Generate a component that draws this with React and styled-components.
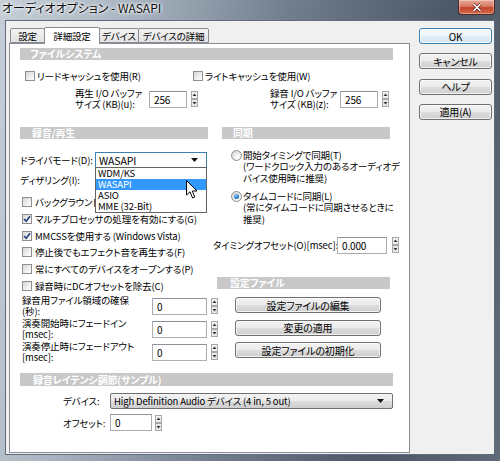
import React from 'react';
import styled, { createGlobalStyle } from 'styled-components';

const GlobalStyle = createGlobalStyle`
  html, body {
    margin: 0;
    padding: 0;
    background: #ffffff;
  }
  body {
    font-family: "Noto Sans CJK JP", "Noto Sans", sans-serif;
    font-size: 9.5px;
    letter-spacing: -0.15px;
    color: #000000;
    font-feature-settings: "palt";
  }
`;

const Window = styled.div`
  width: 500px;
  height: 461px;
  box-sizing: border-box;
  display: flex;
  flex-direction: column;
  padding: 0 5px 6px 5px;
  background: linear-gradient(100deg, #c6cfd8 0%, #aab6c2 22%, #717e8c 50%, #4c5767 78%, #5f6b79 100%);
`;

const TitleBar = styled.div`
  height: 20px;
  display: flex;
  align-items: flex-start;
`;

const Title = styled.div`
  margin-left: -3px;
  font-size: 12px;
  line-height: 16px;
  letter-spacing: 0;
  color: #0b0b0b;
  text-shadow: 0 0 5px #ffffff, 0 0 3px #ffffff, 0 0 2px #e8eef4;
  white-space: nowrap;
`;

const CloseButton = styled.div`
  margin-left: auto;
  width: 37px;
  height: 15px;
  box-sizing: border-box;
  border: 1px solid #4a2720;
  border-top: none;
  border-radius: 0 0 4px 4px;
  background: linear-gradient(#e7a796 0%, #d97d66 45%, #c4432b 55%, #d46a4c 100%);
  display: flex;
  align-items: center;
  justify-content: center;
  box-shadow: inset 0 0 0 1px rgba(255, 255, 255, 0.35);
`;

const Body = styled.div`
  flex: 1;
  display: flex;
  box-sizing: border-box;
  background: #f0f0f0;
  border: 1px solid #5f6c7c;
  padding: 6px 0 0 3px;
`;

const LeftPane = styled.div`
  width: 401px;
  display: flex;
  flex-direction: column;
`;

const TabStrip = styled.div`
  height: 16px;
  display: flex;
  align-items: flex-end;
  padding-left: 1px;
  position: relative;
  z-index: 1;
`;

const Tab = styled.div`
  width: ${p => p.$w}px;
  height: ${p => (p.$active ? 17 : 15)}px;
  margin-bottom: ${p => (p.$active ? -1 : 0)}px;
  box-sizing: border-box;
  border: 1px solid #898c95;
  border-bottom: ${p => (p.$active ? 'none' : '1px solid #898c95')};
  margin-right: -1px;
  border-radius: 2px 2px 0 0;
  background: ${p => (p.$active ? '#ffffff' : 'linear-gradient(#f3f3f3, #e3e3e3)')};
  display: flex;
  align-items: center;
  justify-content: center;
  font-size: 9.5px;
  white-space: nowrap;
`;

const Panel = styled.div`
  height: 410px;
  box-sizing: border-box;
  background: #ffffff;
  border: 1px solid #898c95;
  padding: 4px 16px 0 10px;
  display: flex;
  flex-direction: column;
`;

const SectionBar = styled.div`
  height: ${p => p.$h || 12}px;
  margin-top: ${p => p.$mt || 0}px;
  margin-left: ${p => p.$inset || 0}px;
  margin-right: ${p => p.$right || 0}px;
  padding-left: ${p => p.$pad || 10}px;
  background: #c8c8c8;
  color: #ffffff;
  font-weight: bold;
  font-size: 10px;
  line-height: ${p => p.$h || 12}px;
  white-space: nowrap;
`;

const CheckRow = styled.div`
  height: 14px;
  margin-top: 9px;
  padding-left: 5px;
  display: flex;
  align-items: center;
`;

const CheckItem = styled.div`
  width: ${p => (p.$w ? `${p.$w}px` : 'auto')};
  display: flex;
  align-items: center;
  gap: 2px;
  white-space: nowrap;
`;

const Box = styled.div`
  width: 10px;
  height: 10px;
  flex: none;
  box-sizing: border-box;
  border: 1px solid #8e8f8f;
  background: linear-gradient(135deg, #d6d6d6 0%, #f4f4f4 70%, #ffffff 100%);
  display: flex;
  align-items: center;
  justify-content: center;
`;

const CheckLine = styled.div`
  height: 16.8px;
  padding-left: 2px;
  display: flex;
  align-items: center;
  gap: 3px;
  white-space: nowrap;
`;

const CheckList = styled.div`
  margin-top: 5.6px;
  display: flex;
  flex-direction: column;
`;

const BufferRow = styled.div`
  height: 22px;
  margin-top: 5px;
  display: flex;
  align-items: center;
`;

const Group = styled.div`
  display: flex;
  align-items: center;
  margin-left: ${p => p.$ml || 0}px;
`;

const TwoLine = styled.div`
  width: ${p => p.$w}px;
  flex: none;
  line-height: 11.5px;
  white-space: nowrap;
`;

const NumInput = styled.div`
  width: ${p => p.$w}px;
  height: 17px;
  flex: none;
  box-sizing: border-box;
  border: 1px solid #abadb3;
  border-top-color: #8f9399;
  background: #ffffff;
  padding-left: 4px;
  display: flex;
  align-items: center;
  font-size: 10px;
`;

const SpinWrap = styled.div`
  margin-left: ${p => p.$ml || 4}px;
  display: flex;
  flex: none;
`;

const Columns = styled.div`
  display: flex;
  margin-top: 17px;
`;

const LeftCol = styled.div`
  width: 188px;
  display: flex;
  flex-direction: column;
`;

const RightCol = styled.div`
  width: 180px;
  margin-left: 5px;
  display: flex;
  flex-direction: column;
`;

const FieldRow = styled.div`
  height: 16px;
  margin-top: ${p => p.$mt || 0}px;
  padding-left: ${p => p.$pl || 0}px;
  display: flex;
  align-items: center;
`;

const FieldLabel = styled.div`
  width: ${p => p.$w}px;
  flex: none;
  white-space: nowrap;
`;

const Select = styled.div`
  position: relative;
  width: ${p => p.$w}px;
  height: 16px;
  flex: none;
  box-sizing: border-box;
  border: 1px solid ${p => (p.$focus ? '#3c7fb1' : '#707070')};
  border-radius: ${p => (p.$focus ? 0 : 2)}px;
  background: ${p => (p.$focus ? '#ffffff' : 'linear-gradient(#f2f2f2 0%, #ebebeb 50%, #dddddd 51%, #cfcfcf 100%)')};
  padding: 0 8px 0 3px;
  display: flex;
  align-items: center;
  justify-content: space-between;
  font-size: ${p => (p.$focus ? 10.5 : 9.5)}px;
  white-space: nowrap;
`;

const Dropdown = styled.div`
  position: absolute;
  top: 100%;
  left: -1px;
  right: -1px;
  z-index: 5;
  box-sizing: border-box;
  border: 1px solid #646464;
  background: #ffffff;
  display: flex;
  flex-direction: column;
`;

const Option = styled.div`
  height: 11px;
  line-height: 11px;
  padding-left: 2px;
  font-size: 9.5px;
  background: ${p => (p.$hl ? '#3399ff' : 'transparent')};
  color: ${p => (p.$hl ? '#ffffff' : '#000000')};
`;

const Cursor = styled.svg`
  position: absolute;
  left: 90px;
  top: 12px;
`;

const NumRow = styled.div`
  height: 23px;
  margin-top: ${p => p.$mt || 0}px;
  padding-left: 2px;
  display: flex;
  align-items: center;
`;

const RadioOption = styled.div`
  margin-top: ${p => p.$mt}px;
  padding-left: 18px;
  display: flex;
  align-items: flex-start;
`;

const Radio = styled.div`
  width: 11px;
  height: 11px;
  flex: none;
  margin-top: 0.5px;
  box-sizing: border-box;
  border: 1px solid #8e8f8f;
  border-radius: 50%;
  background: radial-gradient(circle at 65% 70%, #ffffff 0%, #eeeeee 40%, #cfcfcf 100%);
  display: flex;
  align-items: center;
  justify-content: center;
`;

const RadioDot = styled.div`
  width: 5px;
  height: 5px;
  border-radius: 50%;
  background: radial-gradient(circle at 40% 35%, #8fd1ff 0%, #2a7cc7 55%, #174f86 100%);
`;

const RadioText = styled.div`
  margin-left: 1px;
  line-height: 11.5px;
  white-space: nowrap;
`;

const ActionButton = styled.div`
  width: ${p => p.$w}px;
  height: 16px;
  margin-top: ${p => p.$mt || 0}px;
  margin-left: ${p => p.$ml || 0}px;
  box-sizing: border-box;
  border: 1px solid ${p => (p.$focus ? '#3c7fb1' : '#707070')};
  border-radius: 3px;
  background: ${p =>
    p.$focus
      ? 'linear-gradient(#f4f9fc 0%, #eef5fa 50%, #e0edf6 51%, #d4e6f2 100%)'
      : 'linear-gradient(#f2f2f2 0%, #ebebeb 50%, #dddddd 51%, #cfcfcf 100%)'};
  box-shadow: inset 0 0 0 1px rgba(255, 255, 255, 0.7);
  display: flex;
  align-items: center;
  justify-content: center;
  font-size: 10px;
  white-space: nowrap;
`;

const ButtonColumn = styled.div`
  width: 73px;
  margin-left: 9px;
  padding-top: 1px;
  display: flex;
  flex-direction: column;
  gap: 9.3px;
`;

const Spinner = () => (
  <svg width="7" height="16" viewBox="0 0 7 16">
    <rect x="0.5" y="0.5" width="6" height="7" fill="#f3f3f3" stroke="#a7a7a7" />
    <rect x="0.5" y="8.5" width="6" height="7" fill="#e9e9e9" stroke="#a7a7a7" />
    <path d="M3.5 2.5 L5.5 5 L1.5 5 Z" fill="#333" />
    <path d="M1.5 11 L5.5 11 L3.5 13.5 Z" fill="#333" />
  </svg>
);

const Arrow = () => (
  <svg width="7" height="4" viewBox="0 0 7 4">
    <path d="M0 0 L7 0 L3.5 4 Z" fill="#111" />
  </svg>
);

const Check = ({ on }) => (
  <Box>
    {on && (
      <svg width="8" height="8" viewBox="0 0 8 8">
        <path d="M1 4 L3.2 6.3 L7 1.2" fill="none" stroke="#24407a" strokeWidth="1.6" />
      </svg>
    )}
  </Box>
);

const Spin = ({ w, value, ml }) => (
  <>
    <NumInput $w={w}>{value}</NumInput>
    <SpinWrap $ml={ml}>
      <Spinner />
    </SpinWrap>
  </>
);

const checks = [
  ['バックグラウンド', false],
  ['マルチプロセッサの処理を有効にする(G)', true],
  ['MMCSSを使用する (Windows Vista)', true],
  ['停止後でもエフェクト音を再生する(F)', false],
  ['常にすべてのデバイスをオープンする(P)', false],
  ['録音時にDCオフセットを除去(C)', false],
];

const numRows = [
  ['録音用ファイル領域の確保', '(秒):'],
  ['演奏開始時にフェードイン', '[msec]:'],
  ['演奏停止時にフェードアウト', '[msec]:'],
];

const drivers = ['WDM/KS', 'WASAPI', 'ASIO', 'MME (32-Bit)'];

export default function App() {
  return (
    <>
      <GlobalStyle />
      <Window>
        <TitleBar>
          <Title>オーディオオプション - WASAPI</Title>
          <CloseButton>
            <svg width="10" height="9" viewBox="0 0 10 9">
              <path d="M1.5 1 L8.5 8 M8.5 1 L1.5 8" stroke="#5a1e14" strokeWidth="3" />
              <path d="M1.5 1 L8.5 8 M8.5 1 L1.5 8" stroke="#ffffff" strokeWidth="1.6" />
            </svg>
          </CloseButton>
        </TitleBar>
        <Body>
          <LeftPane>
            <TabStrip>
              <Tab $w={35}>設定</Tab>
              <Tab $w={56} $active>詳細設定</Tab>
              <Tab $w={40}>デバイス</Tab>
              <Tab $w={71}>デバイスの詳細</Tab>
            </TabStrip>
            <Panel>
              <SectionBar>ファイルシステム</SectionBar>
              <CheckRow>
                <CheckItem $w={168}>
                  <Check />
                  リードキャッシュを使用(R)
                </CheckItem>
                <CheckItem>
                  <Check />
                  ライトキャッシュを使用(W)
                </CheckItem>
              </CheckRow>
              <BufferRow>
                <Group $ml={55}>
                  <TwoLine $w={74}>
                    再生 I/O バッファ
                    <br />
                    サイズ (KB)(u):
                  </TwoLine>
                  <Spin w={38} value="256" />
                </Group>
                <Group $ml={72}>
                  <TwoLine $w={70}>
                    録音 I/O バッファ
                    <br />
                    サイズ (KB)(z):
                  </TwoLine>
                  <Spin w={38} value="256" />
                </Group>
              </BufferRow>

              <Columns>
                <LeftCol>
                  <SectionBar $pad={12}>録音/再生</SectionBar>
                  <FieldRow $mt={13}>
                    <FieldLabel $w={75}>ドライバモード(D):</FieldLabel>
                    <Select $w={112} $focus>
                      WASAPI
                      <Arrow />
                      <Dropdown>
                        {drivers.map(d => (
                          <Option key={d} $hl={d === 'WASAPI'}>
                            {d}
                          </Option>
                        ))}
                        <Cursor width="12" height="19" viewBox="0 0 12 19">
                          <path
                            d="M0.5 0.5 L0.5 15 L4 11.8 L6.6 18 L8.8 17 L6.3 11 L11 11 Z"
                            fill="#ffffff"
                            stroke="#000000"
                            strokeWidth="1"
                            strokeLinejoin="round"
                          />
                        </Cursor>
                      </Dropdown>
                    </Select>
                  </FieldRow>
                  <FieldRow $mt={4}>
                    <FieldLabel $w={75}>ディザリング(I):</FieldLabel>
                    <Select $w={112}>
                      <span />
                      <Arrow />
                    </Select>
                  </FieldRow>
                  <CheckList>
                    {checks.map(([label, on]) => (
                      <CheckLine key={label}>
                        <Check on={on} />
                        {label}
                      </CheckLine>
                    ))}
                  </CheckList>
                  {numRows.map(([a, b], i) => (
                    <NumRow key={a} $mt={i === 0 ? 0.6 : 0}>
                      <TwoLine $w={130}>
                        {a}
                        <br />
                        {b}
                      </TwoLine>
                      <Spin w={55} value="0" />
                    </NumRow>
                  ))}
                </LeftCol>

                <RightCol>
                  <SectionBar $inset={9} $right={3} $pad={11}>
                    同期
                  </SectionBar>
                  <RadioOption $mt={10.5}>
                    <Radio />
                    <RadioText>
                      開始タイミングで同期(T)
                      <br />
                      (ワードクロック入力のあるオーディオデ
                      <br />
                      バイス使用時に推奨)
                    </RadioText>
                  </RadioOption>
                  <RadioOption $mt={6.5}>
                    <Radio>
                      <RadioDot />
                    </Radio>
                    <RadioText>
                      タイムコードに同期(L)
                      <br />
                      (常にタイムコードに同期させるときに
                      <br />
                      推奨)
                    </RadioText>
                  </RadioOption>
                  <FieldRow $mt={12}>
                    <FieldLabel $w={124}>タイミングオフセット(O)[msec]:</FieldLabel>
                    <Spin w={50} value="0.000" ml={5} />
                  </FieldRow>
                  <SectionBar $mt={24} $inset={4} $right={3} $pad={13}>
                    設定ファイル
                  </SectionBar>
                  <ActionButton $w={146} $ml={22} $mt={8}>
                    設定ファイルの編集
                  </ActionButton>
                  <ActionButton $w={146} $ml={22} $mt={6.5}>
                    変更の適用
                  </ActionButton>
                  <ActionButton $w={146} $ml={22} $mt={6.5}>
                    設定ファイルの初期化
                  </ActionButton>
                </RightCol>
              </Columns>

              <SectionBar $mt={9} $h={13} $pad={13}>
                録音レイテンシ調節(サンプル)
              </SectionBar>
              <FieldRow $mt={7} $pl={43}>
                <FieldLabel $w={47}>デバイス:</FieldLabel>
                <Select $w={283}>
                  High Definition Audio デバイス (4 in, 5 out)
                  <Arrow />
                </Select>
              </FieldRow>
              <FieldRow $mt={6} $pl={43}>
                <FieldLabel $w={47}>オフセット:</FieldLabel>
                <Spin w={42} value="0" ml={3} />
              </FieldRow>
            </Panel>
          </LeftPane>
          <ButtonColumn>
            <ActionButton $w={73} $focus>
              OK
            </ActionButton>
            <ActionButton $w={73}>キャンセル</ActionButton>
            <ActionButton $w={73}>ヘルプ</ActionButton>
            <ActionButton $w={73}>適用(A)</ActionButton>
          </ButtonColumn>
        </Body>
      </Window>
    </>
  );
}
